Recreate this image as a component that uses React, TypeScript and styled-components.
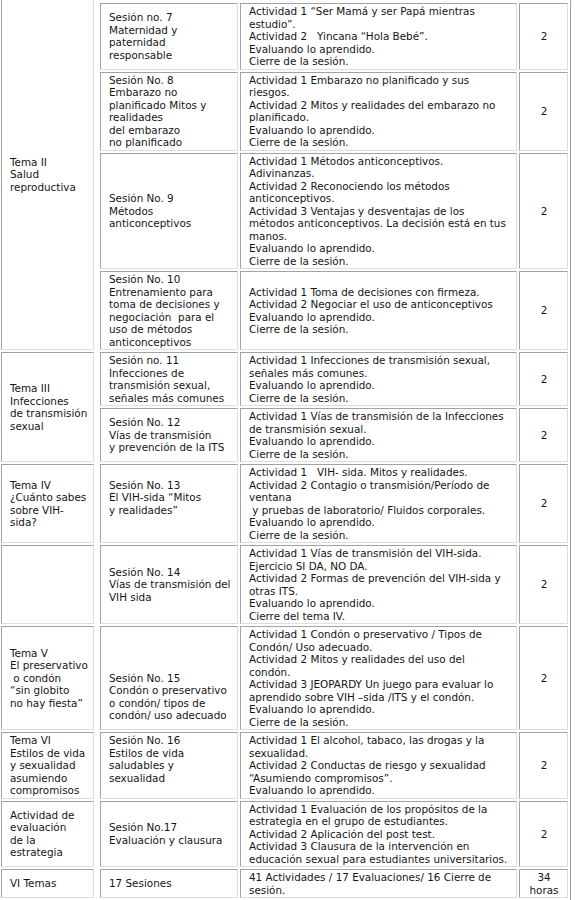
import React from "react";
import styled, { createGlobalStyle } from "styled-components";

const GlobalStyle = createGlobalStyle`
  body {
    margin: 0;
    background: #ffffff;
    color: #151515;
    font-family: "DejaVu Sans", Verdana, sans-serif;
    font-size: 10.4px;
  }
`;

const Table = styled.div`
  display: grid;
  grid-template-columns: 93px 2px 138px 277px 49px;
  grid-auto-rows: auto;
  gap: 2px;
  width: max-content;
  margin-left: -2px;
  padding: 2px;
  border: 1px solid;
  border-color: transparent #9c9c9c #9c9c9c #d6d6d6;
`;

const Cell = styled.div<{
  $col: number;
  $row: number;
  $span?: number;
  $center?: boolean;
  $openTop?: boolean;
}>`
  grid-column: ${(p) => p.$col};
  grid-row: ${(p) => p.$row} / span ${(p) => p.$span ?? 1};
  display: flex;
  flex-direction: column;
  justify-content: center;
  padding: 1px 7px 1px 8px;
  border: 1px solid;
  border-color: #a2a2a2 #dedede #dedede #a2a2a2;
  text-align: ${(p) => (p.$center ? "center" : "left")};
  ${(p) => p.$openTop && "border-top-color: transparent; margin-top: -4px;"}
`;

const Line = styled.div`
  white-space: pre;
  line-height: 12.5px;
  min-height: 12.5px;
`;

type Session = {
  session: string[];
  activities: string[];
  hours: string[];
};

type Topic = {
  topic: string[];
  open?: boolean;
  sessions: Session[];
};

const closing = ["Evaluando lo aprendido.", "Cierre de la sesión."];

const plan: Topic[] = [
  {
    topic: ["Tema II", "Salud", "reproductiva"],
    open: true,
    sessions: [
      {
        session: ["Sesión no. 7", "Maternidad y", "paternidad", "responsable"],
        activities: [
          "Actividad 1 “Ser Mamá y ser Papá mientras",
          "estudio”.",
          "Actividad 2   Yincana “Hola Bebé”.",
          ...closing,
        ],
        hours: ["2"],
      },
      {
        session: [
          "Sesión No. 8",
          "Embarazo no",
          "planificado Mitos y",
          "realidades",
          "del embarazo",
          "no planificado",
        ],
        activities: [
          "Actividad 1 Embarazo no planificado y sus",
          "riesgos.",
          "Actividad 2 Mitos y realidades del embarazo no",
          "planificado.",
          ...closing,
        ],
        hours: ["2"],
      },
      {
        session: ["Sesión No. 9", "Métodos", "anticonceptivos"],
        activities: [
          "Actividad 1 Métodos anticonceptivos.",
          "Adivinanzas.",
          "Actividad 2 Reconociendo los métodos",
          "anticonceptivos.",
          "Actividad 3 Ventajas y desventajas de los",
          "métodos anticonceptivos. La decisión está en tus",
          "manos.",
          ...closing,
        ],
        hours: ["2"],
      },
      {
        session: [
          "Sesión No. 10",
          "Entrenamiento para",
          "toma de decisiones y",
          "negociación  para el",
          "uso de métodos",
          "anticonceptivos",
        ],
        activities: [
          "Actividad 1 Toma de decisiones con firmeza.",
          "Actividad 2 Negociar el uso de anticonceptivos",
          ...closing,
        ],
        hours: ["2"],
      },
    ],
  },
  {
    topic: ["Tema III", "Infecciones", "de transmisión", "sexual"],
    sessions: [
      {
        session: [
          "Sesión no. 11",
          "Infecciones de",
          "transmisión sexual,",
          "señales más comunes",
        ],
        activities: [
          "Actividad 1 Infecciones de transmisión sexual,",
          "señales más comunes.",
          ...closing,
        ],
        hours: ["2"],
      },
      {
        session: ["Sesión No. 12", "Vías de transmisión", "y prevención de la ITS"],
        activities: [
          "Actividad 1 Vías de transmisión de la Infecciones",
          "de transmisión sexual.",
          ...closing,
        ],
        hours: ["2"],
      },
    ],
  },
  {
    topic: ["Tema IV", "¿Cuánto sabes", "sobre VIH-", "sida?"],
    sessions: [
      {
        session: ["Sesión No. 13", "El VIH-sida “Mitos", "y realidades”", ""],
        activities: [
          "Actividad 1   VIH- sida. Mitos y realidades.",
          "Actividad 2 Contagio o transmisión/Período de",
          "ventana",
          " y pruebas de laboratorio/ Fluidos corporales.",
          ...closing,
        ],
        hours: ["2"],
      },
    ],
  },
  {
    topic: [],
    sessions: [
      {
        session: ["Sesión No. 14", "Vías de transmisión del", "VIH sida"],
        activities: [
          "Actividad 1 Vías de transmisión del VIH-sida.",
          "Ejercicio SI DA, NO DA.",
          "Actividad 2 Formas de prevención del VIH-sida y",
          "otras ITS.",
          "Evaluando lo aprendido.",
          "Cierre del tema IV.",
        ],
        hours: ["2"],
      },
    ],
  },
  {
    topic: ["Tema V", "El preservativo", " o condón", "“sin globito", "no hay fiesta”"],
    sessions: [
      {
        session: [
          "",
          "",
          "",
          "Sesión No. 15",
          "Condón o preservativo",
          "o condón/ tipos de",
          "condón/ uso adecuado",
        ],
        activities: [
          "Actividad 1 Condón o preservativo / Tipos de",
          "Condón/ Uso adecuado.",
          "Actividad 2 Mitos y realidades del uso del",
          "condón.",
          "Actividad 3 JEOPARDY Un juego para evaluar lo",
          "aprendido sobre VIH –sida /ITS y el condón.",
          ...closing,
        ],
        hours: ["2"],
      },
    ],
  },
  {
    topic: ["Tema VI", "Estilos de vida", "y sexualidad", "asumiendo", "compromisos"],
    sessions: [
      {
        session: ["Sesión No. 16", "Estilos de vida", "saludables y", "sexualidad", ""],
        activities: [
          "Actividad 1 El alcohol, tabaco, las drogas y la",
          "sexualidad.",
          "Actividad 2 Conductas de riesgo y sexualidad",
          "“Asumiendo compromisos”.",
          "Evaluando lo aprendido.",
        ],
        hours: ["2"],
      },
    ],
  },
  {
    topic: ["Actividad de", "evaluación", "de la", "estrategia"],
    sessions: [
      {
        session: ["Sesión No.17", "Evaluación y clausura"],
        activities: [
          "Actividad 1 Evaluación de los propósitos de la",
          "estrategia en el grupo de estudiantes.",
          "Actividad 2 Aplicación del post test.",
          "Actividad 3 Clausura de la intervención en",
          "educación sexual para estudiantes universitarios.",
        ],
        hours: ["2"],
      },
    ],
  },
  {
    topic: ["VI Temas"],
    sessions: [
      {
        session: ["17 Sesiones"],
        activities: ["41 Actividades / 17 Evaluaciones/ 16 Cierre de", "sesión."],
        hours: ["34", "horas"],
      },
    ],
  },
];

const Lines = ({ lines }: { lines: string[] }) => (
  <>
    {lines.map((text, i) => (
      <Line key={i}>{text}</Line>
    ))}
  </>
);

export default function App() {
  let row = 1;
  const cells: React.ReactNode[] = [];

  plan.forEach((topic, t) => {
    cells.push(
      <Cell
        key={`t${t}`}
        $col={1}
        $row={row}
        $span={topic.sessions.length}
        $openTop={topic.open}
      >
        <Lines lines={topic.topic} />
      </Cell>
    );
    topic.sessions.forEach((s, i) => {
      cells.push(
        <Cell key={`s${t}-${i}`} $col={3} $row={row}>
          <Lines lines={s.session} />
        </Cell>,
        <Cell key={`a${t}-${i}`} $col={4} $row={row}>
          <Lines lines={s.activities} />
        </Cell>,
        <Cell key={`h${t}-${i}`} $col={5} $row={row} $center>
          <Lines lines={s.hours} />
        </Cell>
      );
      row += 1;
    });
  });

  return (
    <>
      <GlobalStyle />
      <Table>{cells}</Table>
    </>
  );
}
